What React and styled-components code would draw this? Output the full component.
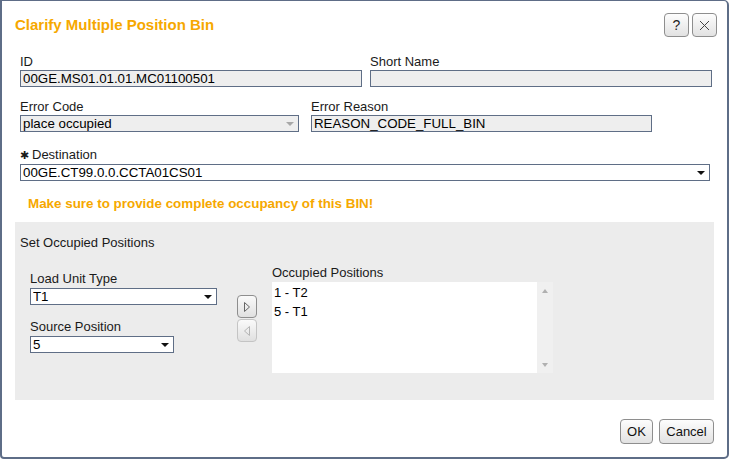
import React from 'react';
import styled, { createGlobalStyle } from 'styled-components';

const GlobalStyle = createGlobalStyle`
  html, body {
    margin: 0;
    padding: 0;
    background: #fff;
  }
  body {
    font-family: "Liberation Sans", Arial, sans-serif;
    font-size: 13px;
    color: #000;
  }
`;

const Dialog = styled.div`
  box-sizing: border-box;
  width: 729px;
  height: 459px;
  border: solid #5e6d87;
  border-width: 1px 2px 2px 2px;
  border-radius: 0 5px 5px 4px;
  background: #fff;
  display: flex;
  flex-direction: column;
`;

const Header = styled.div`
  display: flex;
  align-items: center;
  padding: 12px 10px 0 13px;
`;

const Title = styled.h1`
  flex: 1;
  margin: 0;
  font-size: 15px;
  line-height: 18px;
  font-weight: bold;
  color: #f6a800;
`;

const HeaderButtons = styled.div`
  display: flex;
  gap: 3px;
`;

const ToolButton = styled.button`
  box-sizing: border-box;
  width: 25px;
  height: 24px;
  padding: 0;
  display: flex;
  align-items: center;
  justify-content: center;
  border: 1px solid #8e8e8e;
  border-radius: 4px;
  background: linear-gradient(#fdfdfd, #e2e2e2);
  font-family: "Liberation Sans", Arial, sans-serif;
  font-size: 14px;
  color: #222;
`;

const Body = styled.div`
  padding: 0 13px;
`;

const Fields = styled.div`
  padding: 17px 2px 0 5px;
  display: flex;
  flex-direction: column;
`;

const Row = styled.div`
  display: flex;
  gap: ${(p) => p.$gap || 8}px;
  margin-top: ${(p) => p.$top || 0}px;
`;

const Field = styled.div`
  width: ${(p) => p.$w}px;
  display: flex;
  flex-direction: column;
`;

const Label = styled.div`
  line-height: 15px;
  margin-bottom: 1px;
  color: #1a1a1a;
  white-space: nowrap;
`;

const Box = styled.div`
  box-sizing: border-box;
  height: 17px;
  width: ${(p) => (p.$w ? `${p.$w}px` : '100%')};
  border: 1px solid #5f6e86;
  background: ${(p) => (p.$white ? '#fff' : '#eeeeee')};
  display: flex;
  align-items: center;
  padding: 0 3px 0 2px;
  line-height: 15px;
  white-space: nowrap;
`;

const BoxText = styled.span`
  flex: 1;
  overflow: hidden;
  font-size: 13.3px;
`;

const Caret = styled.span`
  width: 0;
  height: 0;
  margin-right: 1px;
  border-left: 4px solid transparent;
  border-right: 4px solid transparent;
  border-top: 4px solid ${(p) => (p.$muted ? '#a8a8a8' : '#111')};
`;

const Star = styled.span`
  font-size: 11px;
  margin-right: 3px;
`;

const Warning = styled.div`
  margin: 15px 0 0 8px;
  font-size: 13.4px;
  font-weight: bold;
  line-height: 15px;
  color: #f6a800;
`;

const Panel = styled.div`
  margin-top: 11px;
  height: 178px;
  box-sizing: border-box;
  background: #ececec;
  padding: 13px 0 0 5px;
`;

const PanelTitle = styled.div`
  line-height: 15px;
  color: #1a1a1a;
`;

const PanelRow = styled.div`
  display: flex;
  align-items: flex-start;
  margin-top: 15px;
`;

const LeftCol = styled.div`
  width: 187px;
  margin-left: 10px;
  padding-top: 6px;
  display: flex;
  flex-direction: column;
`;

const PanelLabel = styled(Label)`
  line-height: 16px;
  margin-top: ${(p) => p.$top || 0}px;
`;

const MoveCol = styled.div`
  margin-left: 20px;
  padding-top: 30px;
  display: flex;
  flex-direction: column;
  gap: 1px;
`;

const MoveButton = styled.button`
  box-sizing: border-box;
  width: 20px;
  height: 23px;
  padding: 0;
  display: flex;
  align-items: center;
  justify-content: center;
  border: 1px solid ${(p) => (p.disabled ? '#c4c4c4' : '#8e8e8e')};
  border-radius: 4px;
  background: linear-gradient(#fafafa, #e0e0e0);
`;

const RightCol = styled.div`
  margin-left: 15px;
  display: flex;
  flex-direction: column;
`;

const ListWrap = styled.div`
  margin-top: 1px;
  display: flex;
  height: 91px;
`;

const List = styled.div`
  width: 265px;
  background: #fff;
  padding-top: 1px;
  box-sizing: border-box;
`;

const ListItem = styled.div`
  line-height: 19px;
  padding-left: 2px;
`;

const Scrollbar = styled.div`
  width: 16px;
  background: #f0f0f0;
  display: flex;
  flex-direction: column;
  justify-content: space-between;
  align-items: center;
  padding: 7px 0 6px;
  box-sizing: border-box;
`;

const ScrollArrow = styled.span`
  width: 0;
  height: 0;
  border-left: 3px solid transparent;
  border-right: 3px solid transparent;
  ${(p) => (p.$up ? 'border-bottom' : 'border-top')}: 4px solid #b0b0b0;
`;

const Footer = styled.div`
  display: flex;
  justify-content: flex-end;
  gap: 6px;
  padding: 19px 13px 0;
`;

const DialogButton = styled.button`
  box-sizing: border-box;
  height: 25px;
  width: ${(p) => p.$w}px;
  padding: 0;
  border: 1px solid #8e8e8e;
  border-radius: 4px;
  background: linear-gradient(#fdfdfd, #e2e2e2);
  font-family: "Liberation Sans", Arial, sans-serif;
  font-size: 13px;
  color: #111;
`;

const Triangle = ({ dir, color }) => (
  <svg width="8" height="12" viewBox="0 0 8 12">
    <polygon
      points={dir === 'right' ? '1.5,1.5 6.5,6 1.5,10.5' : '6.5,1.5 1.5,6 6.5,10.5'}
      fill="none"
      stroke={color}
      strokeWidth="1"
    />
  </svg>
);

const CloseIcon = () => (
  <svg width="11" height="11" viewBox="0 0 11 11">
    <path d="M1 1 L10 10 M10 1 L1 10" stroke="#444" strokeWidth="1" />
  </svg>
);

export default function App() {
  return (
    <>
      <GlobalStyle />
      <Dialog>
        <Header>
          <Title>Clarify Multiple Position Bin</Title>
          <HeaderButtons>
            <ToolButton>?</ToolButton>
            <ToolButton><CloseIcon /></ToolButton>
          </HeaderButtons>
        </Header>

        <Body>
          <Fields>
            <Row>
              <Field $w={342}>
                <Label>ID</Label>
                <Box><BoxText>00GE.MS01.01.01.MC01100501</BoxText></Box>
              </Field>
              <Field $w={342}>
                <Label>Short Name</Label>
                <Box />
              </Field>
            </Row>

            <Row $gap={12} $top={12}>
              <Field $w={279}>
                <Label>Error Code</Label>
                <Box>
                  <BoxText>place occupied</BoxText>
                  <Caret $muted />
                </Box>
              </Field>
              <Field $w={341}>
                <Label>Error Reason</Label>
                <Box><BoxText>REASON_CODE_FULL_BIN</BoxText></Box>
              </Field>
            </Row>

            <Row $top={15}>
              <Field $w={690}>
                <Label><Star>✱</Star>Destination</Label>
                <Box $white>
                  <BoxText>00GE.CT99.0.0.CCTA01CS01</BoxText>
                  <Caret />
                </Box>
              </Field>
            </Row>

            <Warning>Make sure to provide complete occupancy of this BIN!</Warning>
          </Fields>

          <Panel>
            <PanelTitle>Set Occupied Positions</PanelTitle>
            <PanelRow>
              <LeftCol>
                <PanelLabel>Load Unit Type</PanelLabel>
                <Box $white>
                  <BoxText>T1</BoxText>
                  <Caret />
                </Box>
                <PanelLabel $top={14}>Source Position</PanelLabel>
                <Box $white $w={144}>
                  <BoxText>5</BoxText>
                  <Caret />
                </Box>
              </LeftCol>

              <MoveCol>
                <MoveButton><Triangle dir="right" color="#666" /></MoveButton>
                <MoveButton disabled><Triangle dir="left" color="#b4b4b4" /></MoveButton>
              </MoveCol>

              <RightCol>
                <Label>Occupied Positions</Label>
                <ListWrap>
                  <List>
                    <ListItem>1 - T2</ListItem>
                    <ListItem>5 - T1</ListItem>
                  </List>
                  <Scrollbar>
                    <ScrollArrow $up />
                    <ScrollArrow />
                  </Scrollbar>
                </ListWrap>
              </RightCol>
            </PanelRow>
          </Panel>
        </Body>

        <Footer>
          <DialogButton $w={33}>OK</DialogButton>
          <DialogButton $w={55}>Cancel</DialogButton>
        </Footer>
      </Dialog>
    </>
  );
}
